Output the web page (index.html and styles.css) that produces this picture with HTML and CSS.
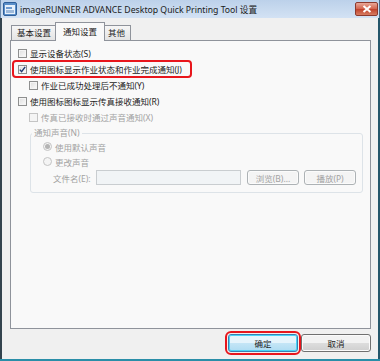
FILE: index.html
```html
<!DOCTYPE html>
<html lang="zh-CN">
<head>
    <meta charset="UTF-8">
    <meta name="viewport" content="width=device-width, initial-scale=1.0">
    <title>设置</title>
    <link rel="stylesheet" href="styles.css">
</head>
<body>
    <div class="window">
        <!-- Title bar -->
        <div class="titlebar">
            <svg class="app-icon" width="14" height="14" viewBox="0 0 14 14">
                <rect x="0.5" y="0.5" width="13" height="13" rx="1.5" fill="#5b8fc9" stroke="#2f5f9a"/>
                <rect x="2" y="3" width="10" height="9" fill="#e8f1fb"/>
                <rect x="3" y="5" width="6" height="2" fill="#6f9bd0"/>
                <rect x="3" y="8" width="8" height="3" fill="#9db9da"/>
            </svg>
            <span class="title">imageRUNNER ADVANCE Desktop Quick Printing Tool 设置</span>
            <div class="close">
                <svg width="10" height="8" viewBox="0 0 10 8">
                    <path d="M1.5 1 L8.5 7 M8.5 1 L1.5 7" stroke="#fff" stroke-width="2"/>
                </svg>
            </div>
        </div>

        <div class="client">
            <!-- Tabs -->
            <div class="tabs">
                <div class="tab">基本设置</div>
                <div class="tab active">通知设置</div>
                <div class="tab">其他</div>
            </div>

            <div class="panel">
                <div class="row"><span class="box"></span>显示设备状态(S)</div>
                <div class="row marked">
                    <span class="box">
                        <svg width="7" height="7" viewBox="0 0 7 7">
                            <path d="M0.8 3.6 L2.6 5.6 L6.2 0.8" fill="none" stroke="#1f3b74" stroke-width="1.4"/>
                        </svg>
                    </span>使用图标显示作业状态和作业完成通知(J)
                </div>
                <div class="row sub"><span class="box"></span>作业已成功处理后不通知(Y)</div>
                <div class="row"><span class="box"></span>使用图标图标显示传真接收通知(R)</div>
                <div class="row sub off"><span class="box"></span>传真已接收时通过声音通知(X)</div>

                <!-- Sound group -->
                <fieldset class="sound">
                    <legend>通知声音(N)</legend>
                    <div class="opt"><span class="radio on"></span>使用默认声音</div>
                    <div class="opt"><span class="radio"></span>更改声音</div>
                    <div class="file-row">
                        <span class="file-label">文件名(E):</span>
                        <div class="field"></div>
                        <div class="btn small">浏览(B)...</div>
                        <div class="btn small">播放(P)</div>
                    </div>
                </fieldset>
            </div>

            <div class="footer">
                <div class="btn ok">确定</div>
                <div class="btn">取消</div>
            </div>
        </div>
    </div>
</body>
</html>
```

FILE: styles.css
```css
body {
    margin: 0;
    padding: 0;
    background-color: #f0f0f0;
    font-family: 'Noto Sans', 'Noto Sans CJK SC', sans-serif;
    font-size: 8.5px;
    color: #1c1c1c;
}

.window {
    width: 380px;
    height: 361px;
    display: flex;
    flex-direction: column;
    box-sizing: border-box;
    border-bottom: 2px solid #2a8ea8;
}

/* Title bar */
.titlebar {
    height: 18px;
    display: flex;
    align-items: center;
    padding-left: 2px;
    background: linear-gradient(#bcd1ea, #d3e2f4);
    border-left: 1px solid #6d8bad;
    border-right: 1px solid #4a6f8a;
}

.app-icon {
    margin-right: 3px;
}

.title {
    font-family: 'Noto Sans', 'Noto Sans CJK SC', sans-serif;
    font-size: 8.7px;
    color: #1b1b1b;
    white-space: nowrap;
}

.close {
    margin-left: auto;
    margin-right: 1px;
    width: 21px;
    height: 12px;
    display: flex;
    align-items: center;
    justify-content: center;
    border: 1px solid #8d3a2e;
    border-radius: 2px;
    background: linear-gradient(#e9a898, #d2624c 50%, #c0402a 51%, #d77d62);
}

.client {
    flex: 1;
    display: flex;
    flex-direction: column;
    padding: 5px 7px 0 8px;
    border-left: 2px solid #33434e;
    border-right: 2px solid #25566a;
}

/* Tabs */
.tabs {
    display: flex;
    align-items: flex-end;
    height: 17px;
    padding-left: 2px;
}

.tab {
    height: 15px;
    line-height: 14px;
    padding: 0 5px;
    box-sizing: border-box;
    border: 1px solid #8f939b;
    border-bottom: none;
    background: linear-gradient(#f6f6f6, #e4e4e4);
    margin-left: -1px;
}

.tab.active {
    height: 19px;
    line-height: 17px;
    margin: 0 -2px -1px -2px;
    padding: 0 7px;
    background: #f9f9f9;
    position: relative;
    z-index: 1;
}

.panel {
    height: 289px;
    box-sizing: border-box;
    border: 1px solid #8f939b;
    background: #f9f9f9;
    padding: 4px 0 0 7px;
    display: flex;
    flex-direction: column;
}

/* Checkbox rows */
.row {
    height: 16px;
    display: flex;
    align-items: center;
}

.row.sub {
    padding-left: 11px;
}

.row.marked {
    align-self: flex-start;
    margin-left: -5px;
    padding: 0 9px 0 5px;
    border-radius: 3px;
    outline: 2px solid #e8161c;
    outline-offset: -1px;
}

.box {
    width: 9px;
    height: 9px;
    box-sizing: border-box;
    margin-right: 3px;
    border: 1px solid #8e8f8f;
    background: linear-gradient(135deg, #dedede, #fbfbfb);
    box-shadow: inset 0 0 0 1px #f4f4f4;
    display: flex;
    align-items: center;
    justify-content: center;
}

.off,
.sound {
    color: #a2a2a2;
}

.off .box {
    border-color: #c4c4c4;
    background: #f4f4f4;
}

/* Sound group */
.sound {
    margin: 2px 7px 0 12px;
    padding: 0 0 6px 0;
    border: 1px solid #dde3e8;
    border-radius: 3px;
}

.sound legend {
    margin-left: 1px;
    padding: 0 2px;
    line-height: 12px;
}

.opt {
    height: 15px;
    display: flex;
    align-items: center;
    padding-left: 12px;
}

.radio {
    width: 9px;
    height: 9px;
    box-sizing: border-box;
    margin-right: 3px;
    border: 1px solid #c4c4c4;
    border-radius: 50%;
    background: #f4f4f4;
    display: flex;
    align-items: center;
    justify-content: center;
}

.radio.on::after {
    content: '';
    width: 5px;
    height: 5px;
    border-radius: 50%;
    background: #b4b4b4;
}

.file-row {
    height: 17px;
    display: flex;
    align-items: center;
    padding-left: 22px;
}

.file-label {
    width: 43px;
}

.field {
    width: 145px;
    height: 15px;
    box-sizing: border-box;
    border: 1px solid #c9cdd0;
    background: #f1f4f6;
    margin-right: 6px;
}

.btn {
    box-sizing: border-box;
    width: 70px;
    height: 18px;
    display: flex;
    align-items: center;
    justify-content: center;
    border: 1px solid #707070;
    border-radius: 3px;
    background: linear-gradient(#f2f2f2 50%, #dddddd 51%, #cfcfcf);
    box-shadow: inset 0 0 0 1px #fbfbfb;
}

.btn.small {
    width: 52px;
    height: 15px;
    margin-right: 5px;
    color: #a2a2a2;
    border-color: #adb2b5;
    background: #f4f4f4;
}

/* Footer */
.footer {
    display: flex;
    justify-content: flex-end;
    gap: 3px;
    margin-top: 5px;
}

.btn.ok {
    border-color: #3c7fb1;
    background: linear-gradient(#e5f4fc 50%, #c4e5f6 51%, #aedcf3);
    box-shadow: inset 0 0 0 1px #48d4f7;
    outline: 2px solid #e8161c;
    outline-offset: 1px;
}
```
